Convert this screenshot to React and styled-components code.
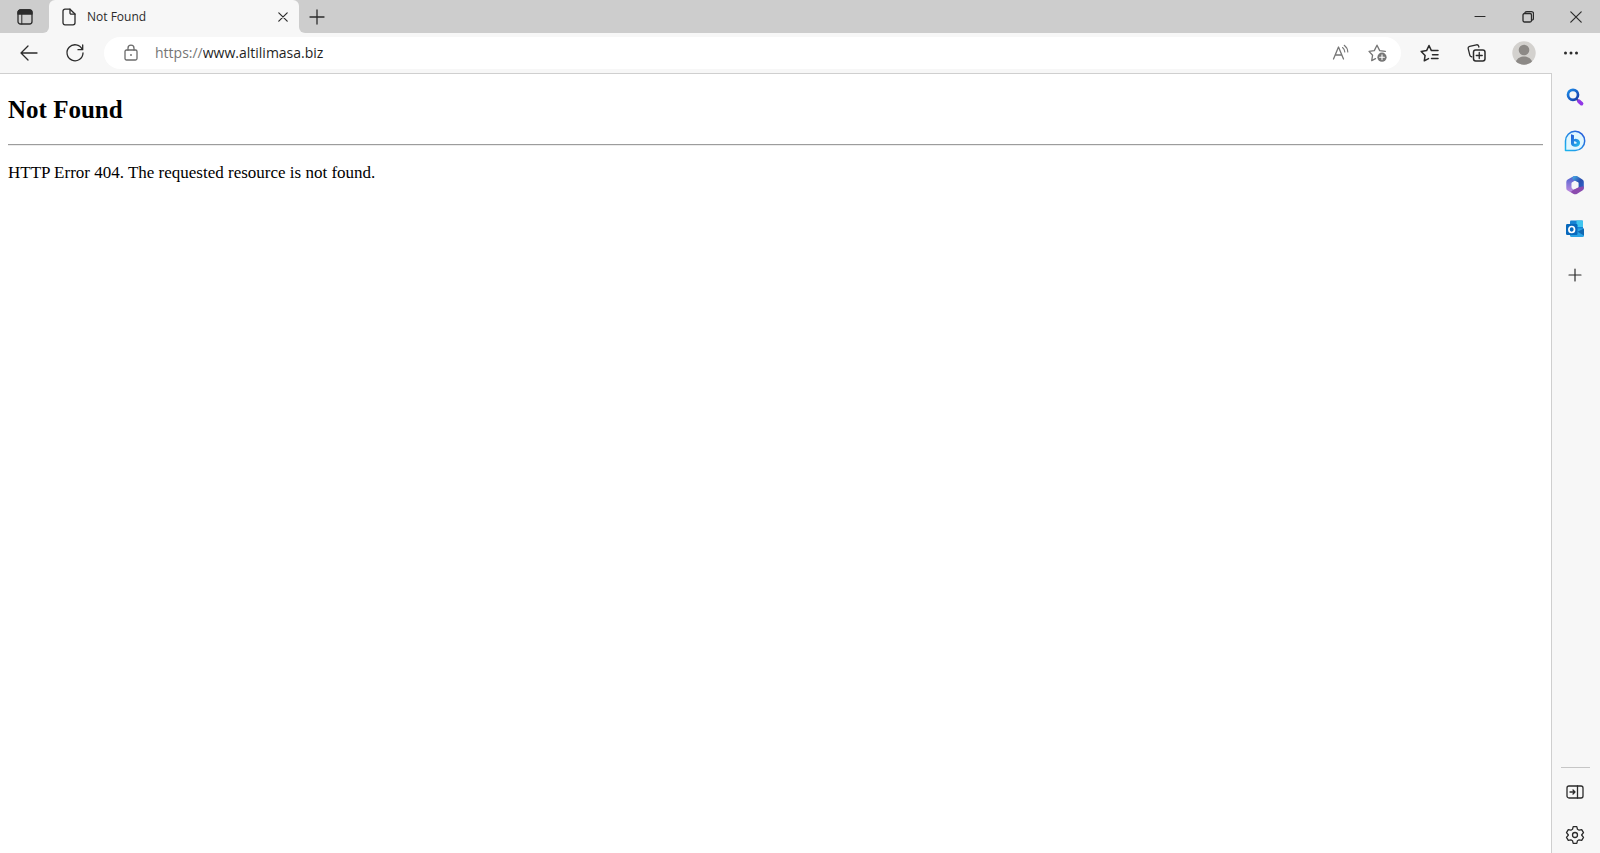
import React, { useState } from "react";
import styled, { createGlobalStyle } from "styled-components";

const GlobalStyle = createGlobalStyle`
  * {
    box-sizing: border-box;
  }

  body {
    margin: 0;
    background: #f7f7f7;
    font-family: "Open Sans", "Noto Sans", sans-serif;
  }
`;

const Browser = styled.div`
  display: flex;
  flex-direction: column;
  min-height: 100vh;
`;

const TabBar = styled.header`
  display: flex;
  height: 33px;
  background: #f7f7f7;
`;

const TabActions = styled.div`
  display: flex;
  width: 49px;
  background: #cdcdcd;
  border-bottom-right-radius: 6px;
`;

const TabSlot = styled.div`
  flex: 0 1 250px;
  background: linear-gradient(#cdcdcd 50%, #f7f7f7 50%);
`;

const Tab = styled.div`
  display: flex;
  align-items: center;
  height: 100%;
  padding: 0 2px 0 12px;
  background: #f7f7f7;
  border-radius: 6px 6px 0 0;
  font-size: 12px;
  line-height: 16px;
  color: #2b2b2b;

  span {
    flex: 1;
    margin-left: 10px;
  }
`;

const Strip = styled.div`
  display: flex;
  flex: 1;
  justify-content: space-between;
  background: #cdcdcd;
  border-bottom-left-radius: 6px;
`;

const WindowControls = styled.div`
  display: flex;
`;

const IconButton = styled.button`
  display: flex;
  align-items: center;
  justify-content: center;
  flex: none;
  width: ${(props) => props.$width || 46}px;
  height: ${(props) => (props.$height ? `${props.$height}px` : "100%")};
  padding: 0;
  border: none;
  background: none;
  color: ${(props) => props.$color || "#2b2b2b"};
  cursor: pointer;
`;

const Toolbar = styled.nav`
  display: flex;
  align-items: center;
  height: 40px;
  padding: 0 6px;
`;

const AddressBar = styled.form`
  display: flex;
  flex: 1;
  align-items: center;
  height: 32px;
  margin: 0 6px;
  padding: 0 8px 0 20px;
  background: #fff;
  border-radius: 16px;
  font-size: 14px;
  line-height: 20px;

  label {
    margin-left: 17px;
    color: #767676;
  }

  input {
    flex: 1;
    min-width: 0;
    padding: 0;
    border: none;
    outline: none;
    background: none;
    font: inherit;
    color: #1f1f1f;
  }
`;

const AddressTools = styled.div`
  display: flex;
  gap: 7px;
  height: 100%;
`;

const ToolbarEnd = styled.div`
  display: flex;
  gap: 1px;
  height: 100%;
`;

const Main = styled.div`
  display: flex;
  flex: 1;
`;

const Page = styled.main`
  flex: 1;
  padding: 0 8px;
  background: #fff;
  border-top: 1px solid #cfcfcf;
  border-right: 1px solid #cfcfcf;
  font-family: "Liberation Serif", "Times New Roman", serif;
  font-size: 17px;
  line-height: 20px;
  color: #000;

  h2 {
    margin: 21px 0 19px;
    font-size: 25px;
    line-height: 30px;
  }

  hr {
    margin: 0;
    border: none;
    border-top: 1px solid #9c9c9c;
    border-bottom: 1px solid #ececec;
  }

  p {
    margin: 17px 0;
  }
`;

const Sidebar = styled.aside`
  display: flex;
  flex-direction: column;
  justify-content: space-between;
  width: 48px;
  padding: 6px 0 0;
`;

const SideGroup = styled.div`
  display: flex;
  flex-direction: column;
  align-items: center;
  gap: ${(props) => props.$gap}px;
  padding-right: 2px;
`;

const Divider = styled.div`
  width: 29px;
  height: 1px;
  margin-bottom: -1px;
  background: #c6c6c6;
`;

function Icon({ w = 20, h = 20, children }) {
  return (
    <svg
      width={w}
      height={h}
      viewBox={`0 0 ${w} ${h}`}
      fill="none"
      stroke="currentColor"
      strokeWidth="1.3"
      strokeLinecap="round"
      strokeLinejoin="round"
      aria-hidden="true"
    >
      {children}
    </svg>
  );
}

const TabActionsIcon = () => (
  <Icon w={16} h={16}>
    <rect x="1" y="1" width="14" height="14" rx="2.5" />
    <path d="M1 5V3.5A2.5 2.5 0 0 1 3.500 1h9A2.500 2.500 0 0 1 15 3.500V5z" fill="currentColor" />
    <path d="M4.800 5v10" strokeWidth="1" />
  </Icon>
);

const FileIcon = () => (
  <Icon w={16} h={18}>
    <path d="M4 1.200h5L14 6v8.800a2 2 0 0 1-2 2H4a2 2 0 0 1-2-2V3.200a2 2 0 0 1 2-2z" />
    <path d="M9 1.200V5a1.200 1.200 0 0 0 1.200 1.200H14" />
  </Icon>
);

const CloseIcon = ({ size = 10 }) => (
  <Icon w={size} h={size}>
    <path d={`M.8.8l${size - 1.6} ${size - 1.6}M${size - 0.8}.8L.8 ${size - 0.8}`} strokeWidth="1.2" />
  </Icon>
);

const PlusIcon = ({ size = 16 }) => (
  <Icon w={size} h={size}>
    <path d={`M${size / 2} 1v${size - 2}M1 ${size / 2}h${size - 2}`} />
  </Icon>
);

const CustomizeIcon = () => (
  <Icon w={14} h={18}>
    <path d="M7 5v12M1 11h12" strokeWidth="1.2" />
  </Icon>
);

const BackIcon = () => (
  <Icon>
    <path d="M18 10H2M9 3l-7 7 7 7" />
  </Icon>
);

const RefreshIcon = () => (
  <Icon>
    <path d="M17.200 6.300A8 8 0 1 0 18 10M17.700 2v4.700H13" />
  </Icon>
);

const LockIcon = () => (
  <Icon w={14} h={18}>
    <rect x="1" y="6" width="12" height="10" rx="1.5" />
    <path d="M4 6V4.200a3 3 0 0 1 6 0V6" />
    <circle cx="7" cy="11" r=".9" fill="currentColor" stroke="none" />
  </Icon>
);

// capital A with two sound waves, all plain strokes
const ReadAloudIcon = () => (
  <Icon>
    <path d="M2.500 16L7.500 4l5 12M4.200 12h6.600" />
    <path d="M11.500 4.500a6 6 0 0 1 2.300 4.500M13.200 2.300a9 9 0 0 1 3.600 6.700" strokeWidth="1.1" />
  </Icon>
);

const AddFavoriteIcon = () => (
  <Icon>
    <path d="M7.500 15.600l-3.800 2 .9-5.400L1 8.400l5.300-.8L9 2.200l2.700 5.400 5.600.8" />
    <circle cx="14" cy="14.200" r="4.600" fill="currentColor" stroke="none" />
    <path d="M14 11.800v4.800M11.600 14.200h4.800" stroke="#fff" strokeWidth="1.1" />
  </Icon>
);

const FavoritesIcon = () => (
  <Icon>
    <path d="M8.500 15.600L4.300 17.800l.8-5.400L1.200 8.400l5.400-.8L9 2.500l2.400 5.100h6.600M12.500 11.700h5.500M11.500 15.500H18" strokeWidth="1.5" />
  </Icon>
);

const CollectionsIcon = () => (
  <Icon>
    <path d="M4.800 13.900l-1-.5a2 2 0 0 1-1-1.300L1.200 5.700A2 2 0 0 1 2.700 3.300l6.700-1.500a2 2 0 0 1 2.300 1.300l.2.900" />
    <rect x="6.500" y="7" width="11.500" height="11" rx="2.200" strokeWidth="1.5" />
    <path d="M12.250 9.500v6M9.250 12.500h6" />
  </Icon>
);

const AvatarIcon = () => (
  <Icon w={24} h={24}>
    <g stroke="none">
      <circle cx="12" cy="12" r="11.700" fill="#d3d1ce" />
      <circle cx="12" cy="9" r="5.300" fill="#8c8986" />
      <path d="M4 20.500c1.400-3.600 4.600-5 8-5s6.600 1.400 8 5a11.700 11.700 0 0 1-16 0z" fill="#8c8986" />
    </g>
  </Icon>
);

const MoreIcon = () => (
  <Icon w={16}>
    <g fill="currentColor" stroke="none">
      <circle cx="2.500" cy="10" r="1.500" />
      <circle cx="8" cy="10" r="1.500" />
      <circle cx="13.500" cy="10" r="1.500" />
    </g>
  </Icon>
);

const MinimizeIcon = () => (
  <Icon w={12} h={12}>
    <path d="M1 5.500h10" strokeWidth="1.1" />
  </Icon>
);

const RestoreIcon = () => (
  <Icon w={12} h={12}>
    <rect x="1" y="2.500" width="8.500" height="8.500" rx="1.500" strokeWidth="1.300" />
    <path d="M3 1.500Q3.500.7 5 .7h4.500a2 2 0 0 1 2 2V7q0 1.500-1 2" strokeWidth="1.300" />
  </Icon>
);

const SearchIcon = () => (
  <Icon>
    <defs>
      <linearGradient id="lens" x1="0" y1="0" x2="1" y2="1">
        <stop offset="0" stopColor="#1c8be8" />
        <stop offset="1" stopColor="#173aa8" />
      </linearGradient>
    </defs>
    <path d="M11.500 12l2 2" stroke="#5a5a72" strokeWidth="2" />
    <path d="M14 14.300l2.500 2.300" stroke="#9238e6" strokeWidth="3.800" />
    <circle cx="8" cy="7.800" r="5" stroke="url(#lens)" strokeWidth="2.700" />
  </Icon>
);

const BingIcon = () => (
  <Icon w={22} h={22}>
    <defs>
      <linearGradient id="bubble" x1="0" y1="1" x2="1" y2="0">
        <stop offset="0" stopColor="#1bb5ee" />
        <stop offset="1" stopColor="#2a55d8" />
      </linearGradient>
      <linearGradient id="bing" x1="0" y1="0" x2="1" y2="1">
        <stop offset="0" stopColor="#2456d6" />
        <stop offset="1" stopColor="#21c4ee" />
      </linearGradient>
    </defs>
    <path d="M1.500 20.500V11A9.600 9.600 0 1 1 11 20.500z" fill="#e0f7ff" stroke="url(#bubble)" strokeWidth="1.500" />
    <path
      d="M7 4.200l3 1v4q1-.8 2.800-.3c4.400 1.200 4.200 6.300.4 7.500q-2.700 1-4.700-.3Q7 15.200 7 13.500zM10 11.300v2.200q1.600.8 2.700-.3.400-1.500-2.700-1.900z"
      fill="url(#bing)"
      fillRule="evenodd"
      stroke="none"
    />
  </Icon>
);

const OfficeIcon = () => (
  <Icon>
    <defs>
      <linearGradient id="officeBlue" x1="0" y1="0" x2="1" y2="1">
        <stop offset="0" stopColor="#48b4ea" />
        <stop offset=".5" stopColor="#2b4fae" />
        <stop offset="1" stopColor="#2f66cf" />
      </linearGradient>
      <linearGradient id="officePurple" x1="0" y1="0" x2="0" y2="1">
        <stop offset="0" stopColor="#4a62cf" />
        <stop offset="1" stopColor="#c08be0" />
      </linearGradient>
    </defs>
    <g stroke="none">
      <path d="M8.500 1.200L2.700 4.600Q1.300 5.400 1.300 7v6.200q0 1.600 1.300 2.400l2.500 1.300q2.400.8 3.900-1.700L6.600 13V7.700L10 5.600V1.300q-.8-.4-1.500-.1z" fill="url(#officePurple)" />
      <path d="M9 1h3l5.400 3.400q1.400.8 1.400 2.400v6q0 1.700-1.400 2.500l-3.900-2.500V7.500L8 4.700Q6.300 3 9 1z" fill="url(#officeBlue)" />
      <path d="M4.500 16.600q2.300.5 3.400-1.600l5.600-2.800 5.200-1v2q0 1.500-1.300 2.300l-5.200 3.200q-2 1-4 0z" fill="#8b4bae" />
      <path d="M10 6.300l3.200 1.800v3.800L10 13.700l-3.200-1.800V8.100z" fill="#f7f7f7" />
    </g>
  </Icon>
);

const OutlookIcon = () => (
  <Icon>
    <rect x="5" y="1.500" width="13" height="11" rx="1" fill="#1683d3" stroke="none" />
    <path d="M11.500 1.500H17a1 1 0 0 1 1 1V8h-6.500z" fill="#40c5ef" stroke="none" />
    <path d="M5 9.500h14v7a1.500 1.500 0 0 1-1.500 1.500H6.500A1.500 1.500 0 0 1 5 16.500z" fill="#28a3e6" stroke="none" />
    <path d="M19 9.500v7l-6.500-3.700z" fill="#1268b1" stroke="none" />
    <rect x="1" y="5" width="11.500" height="11" rx="1.200" fill="#0869bd" stroke="none" />
    <ellipse cx="6.700" cy="10.500" rx="2.800" ry="3" stroke="#fff" strokeWidth="1.700" />
  </Icon>
);

const HidePanelIcon = () => (
  <Icon w={18} h={18}>
    <rect x="1" y="3" width="16" height="12" rx="2" />
    <path d="M11.500 3v12M4 9h5M7 7l2 2-2 2" />
  </Icon>
);

const SettingsIcon = () => (
  <Icon>
    <path d="M8.200 1.700h3.600l.7 2.600 1.600.9 2.600-.6 1.800 3.100L16.600 10l1.900 2.300-1.800 3.100-2.600-.6-1.600.9-.7 2.600H8.200l-.7-2.600-1.600-.9-2.600.6-1.800-3.100L3.400 10 1.500 7.700l1.800-3.100 2.600.6 1.600-.9z" />
    <circle cx="10" cy="10" r="2.500" />
  </Icon>
);

const sideApps = [
  { name: "Search", icon: SearchIcon },
  { name: "Bing", icon: BingIcon },
  { name: "Microsoft 365", icon: OfficeIcon },
  { name: "Outlook", icon: OutlookIcon },
  { name: "Customize", icon: CustomizeIcon },
];

export default function App() {
  const [url, setUrl] = useState("www.altilimasa.biz");

  return (
    <Browser>
      <GlobalStyle />
      <TabBar>
        <TabActions>
          <IconButton $width={49} aria-label="Tab actions"><TabActionsIcon /></IconButton>
        </TabActions>
        <TabSlot>
          <Tab>
            <FileIcon />
            <span>Not Found</span>
            <IconButton $width={28} aria-label="Close tab"><CloseIcon /></IconButton>
          </Tab>
        </TabSlot>
        <Strip>
          <IconButton $width={36} aria-label="New tab"><PlusIcon /></IconButton>
          <WindowControls>
            <IconButton $width={48} aria-label="Minimize"><MinimizeIcon /></IconButton>
            <IconButton $width={48} aria-label="Restore"><RestoreIcon /></IconButton>
            <IconButton $width={48} aria-label="Close"><CloseIcon size={12} /></IconButton>
          </WindowControls>
        </Strip>
      </TabBar>

      <Toolbar>
        <IconButton aria-label="Back"><BackIcon /></IconButton>
        <IconButton aria-label="Refresh"><RefreshIcon /></IconButton>
        <AddressBar onSubmit={(e) => e.preventDefault()}>
          <IconButton type="button" $width={14} $color="#6b6b6b" aria-label="Site information"><LockIcon /></IconButton>
          <label htmlFor="url">https://</label>
          <input id="url" type="text" value={url} onChange={(e) => setUrl(e.target.value)} />
          <AddressTools>
            <IconButton type="button" $width={30} $color="#767676" aria-label="Read aloud"><ReadAloudIcon /></IconButton>
            <IconButton type="button" $width={30} $color="#767676" aria-label="Add to favorites"><AddFavoriteIcon /></IconButton>
          </AddressTools>
        </AddressBar>
        <ToolbarEnd>
          <IconButton aria-label="Favorites"><FavoritesIcon /></IconButton>
          <IconButton aria-label="Collections"><CollectionsIcon /></IconButton>
          <IconButton aria-label="Profile"><AvatarIcon /></IconButton>
          <IconButton aria-label="Settings and more"><MoreIcon /></IconButton>
        </ToolbarEnd>
      </Toolbar>

      <Main>
        <Page>
          <h2>Not Found</h2>
          <hr />
          <p>HTTP Error 404. The requested resource is not found.</p>
        </Page>
        <Sidebar>
          <SideGroup $gap={8}>
            {sideApps.map(({ name, icon: AppIcon }) => (
              <IconButton key={name} $height={36} aria-label={name}>
                <AppIcon />
              </IconButton>
            ))}
          </SideGroup>
          <SideGroup $gap={7}>
            <Divider />
            <IconButton $height={36} aria-label="Hide sidebar"><HidePanelIcon /></IconButton>
            <IconButton $height={36} aria-label="Settings"><SettingsIcon /></IconButton>
          </SideGroup>
        </Sidebar>
      </Main>
    </Browser>
  );
}
